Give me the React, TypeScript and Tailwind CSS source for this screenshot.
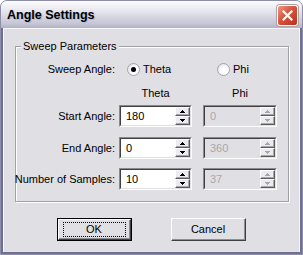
import React from "react";

const BODY = "bg-[#e0dfe3]";

function Arrow({ up, disabled }: { up?: boolean; disabled?: boolean }) {
  const c = disabled ? "#a6a6ae" : "#000";
  return (
    <svg width="5" height="3" viewBox="0 0 5 3" shapeRendering="crispEdges">
      {up ? (
        <>
          <rect x="2" y="0" width="1" height="1" fill={c} />
          <rect x="1" y="1" width="3" height="1" fill={c} />
          <rect x="0" y="2" width="5" height="1" fill={c} />
        </>
      ) : (
        <>
          <rect x="0" y="0" width="5" height="1" fill={c} />
          <rect x="1" y="1" width="3" height="1" fill={c} />
          <rect x="2" y="2" width="1" height="1" fill={c} />
        </>
      )}
    </svg>
  );
}

function SpinButton({ up, disabled }: { up?: boolean; disabled?: boolean }) {
  return (
    <div className="flex h-[9px] items-center justify-center border border-t-white border-l-white border-b-[#5c5c5c] border-r-[#5c5c5c] bg-[#ecebef] shadow-[inset_-1px_-1px_0_#a8a8ac]">
      <Arrow up={up} disabled={disabled} />
    </div>
  );
}

function Spin({ value, disabled }: { value: string; disabled?: boolean }) {
  return (
    <div className="flex h-[22px] border border-t-[#8a8a8e] border-l-[#8a8a8e] border-b-white border-r-white">
      <div
        className={`flex flex-1 border border-t-[#404040] border-l-[#404040] border-b-[#e0dfe3] border-r-[#e0dfe3] ${
          disabled ? BODY : "bg-white"
        }`}
      >
        <span
          className={`flex-1 pl-[5px] leading-[18px] ${
            disabled ? "text-[#a9a8ae]" : "text-black"
          }`}
        >
          {value}
        </span>
        <div className="flex w-[15px] flex-col">
          <SpinButton up disabled={disabled} />
          <SpinButton disabled={disabled} />
        </div>
      </div>
    </div>
  );
}

function Radio({ checked }: { checked?: boolean }) {
  return (
    <span className="flex h-[13px] w-[13px] items-center justify-center rounded-full border border-[#a4a4b0] bg-[radial-gradient(circle_at_65%_65%,#ffffff_35%,#d8d8de)]">
      {checked && <span className="h-[5px] w-[5px] rounded-full bg-black" />}
    </span>
  );
}

function Row({ label, theta, phi }: { label: string; theta: string; phi: string }) {
  return (
    <div className="flex h-[22px] items-center">
      <span className="flex w-[99px] shrink-0 justify-end whitespace-nowrap">{label}</span>
      <div className="ml-[4px] w-[73px] shrink-0">
        <Spin value={theta} />
      </div>
      <div className="ml-[11px] w-[74px] shrink-0">
        <Spin value={phi} disabled />
      </div>
    </div>
  );
}

export default function App() {
  return (
    <div className="h-[255px] w-[303px] overflow-hidden rounded-t-[7px] border border-[#8e8eaa] bg-[#c8c8d6] font-['Liberation_Sans',Arial,sans-serif] text-[11px] text-black">
      {/* title bar */}
      <div className="flex h-[27px] items-start justify-between bg-[linear-gradient(to_bottom,#fdfdfe,#e4e4ec_40%,#c4c4d4_85%,#b2b2c6)] pl-[6px] pr-[4px]">
        <span className="mt-[6px] text-[12.5px] font-bold leading-[16px] [text-shadow:1px_1px_0_#b8b8c8]">
          Angle Settings
        </span>
        <div className="mt-[4px] flex h-[21px] w-[21px] items-center justify-center rounded-[3px] border border-white bg-[linear-gradient(135deg,#ec9a84,#d6553e_45%,#b8301e)] shadow-[0_0_0_1px_#b0a0a8]">
          <svg width="11" height="11" viewBox="0 0 11 11">
            <path d="M1.5 1.5 L9.5 9.5 M9.5 1.5 L1.5 9.5" stroke="#fff" strokeWidth="2.2" strokeLinecap="square" />
          </svg>
        </div>
      </div>

      {/* window frame + body */}
      <div className="h-[226px] border-x-2 border-b-2 border-[#707094]">
        <div className={`flex h-full flex-col border-x border-t border-[#f6f6fa] ${BODY}`}>
          {/* group box */}
          <div className="ml-[11px] mt-[17px] w-[274px] border border-[#a0a0a8] pb-[11px] shadow-[inset_1px_1px_0_#fff,1px_1px_0_#fff]">
            <div className={`-mt-[7px] ml-[5px] w-fit px-[2px] leading-[13px] ${BODY}`}>
              Sweep Parameters
            </div>

            <div className="mt-[5px] flex h-[22px] items-center">
              <span className="w-[99px] shrink-0 whitespace-nowrap text-right">Sweep Angle:</span>
              <div className="ml-[4px] flex w-[73px] shrink-0 items-center gap-[3px] pl-[8px]">
                <Radio checked />
                <span>Theta</span>
              </div>
              <div className="ml-[11px] flex w-[74px] shrink-0 items-center gap-[3px] pl-[14px]">
                <Radio />
                <span>Phi</span>
              </div>
            </div>

            <div className="mt-[2px] flex h-[22px] items-center">
              <span className="w-[99px] shrink-0" />
              <span className="ml-[4px] w-[73px] shrink-0 text-center">Theta</span>
              <span className="ml-[11px] w-[74px] shrink-0 text-center">Phi</span>
            </div>

            <div className="mt-[1px]">
              <Row label="Start Angle:" theta="180" phi="0" />
            </div>
            <div className="mt-[10px]">
              <Row label="End Angle:" theta="0" phi="360" />
            </div>
            <div className="mt-[9px]">
              <Row label="Number of Samples:" theta="10" phi="37" />
            </div>
          </div>

          {/* buttons */}
          <div className="mt-[16px] flex justify-center gap-[39px] pr-[1px]">
            <button className={`h-[23px] w-[75px] border border-black p-0 ${BODY}`}>
              <div className="flex h-full items-center justify-center border border-t-white border-l-white border-b-[#404040] border-r-[#404040] shadow-[inset_-1px_-1px_0_#8e8e92]">
                <div className="flex h-[15px] w-[63px] items-center justify-center border border-dotted border-black">
                  OK
                </div>
              </div>
            </button>
            <button className={`h-[23px] w-[75px] border border-t-white border-l-white border-b-[#404040] border-r-[#404040] p-0 ${BODY} shadow-[inset_-1px_-1px_0_#8e8e92]`}>
              Cancel
            </button>
          </div>
        </div>
      </div>
    </div>
  );
}
